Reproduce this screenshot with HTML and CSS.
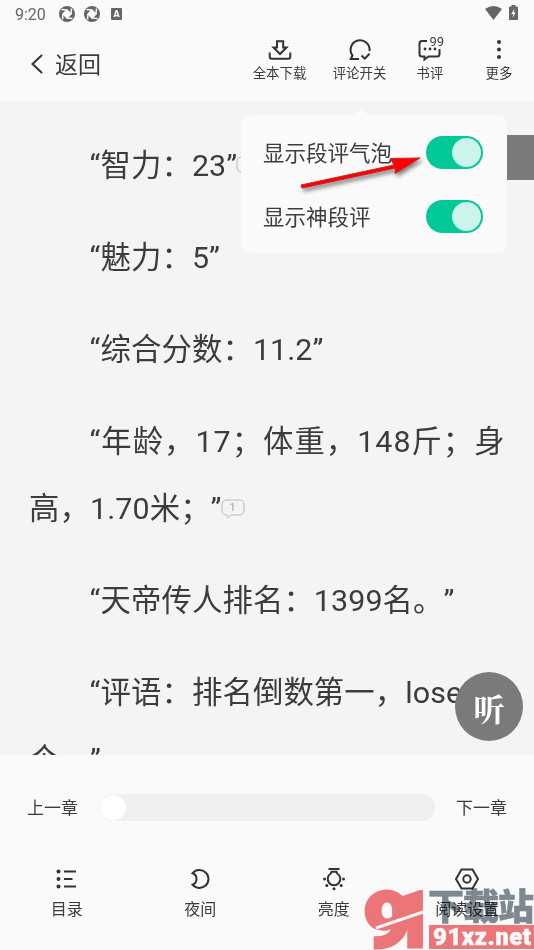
FILE: index.html
```html
<!DOCTYPE html>
<html lang="zh-CN">
<head>
  <meta charset="UTF-8">
  <meta name="viewport" content="width=device-width, initial-scale=1.0">
  <title>阅读</title>
  <link rel="stylesheet" href="styles.css">
</head>
<body>

<div class="reader">
  <div class="status">
    <span class="time">9:20</span>
    <svg class="swirl" width="16" height="16" viewBox="0 0 16 16"><circle cx="8" cy="8" r="8"/><path d="M8 3L13 8 8 13 3 8z"/><path class="cut" d="M8 4L2.500 3.500M12 8L12.500 2.500M8 12l5.500.500M4 8l-.500 5.500"/></svg>
    <svg class="swirl" width="16" height="16" viewBox="0 0 16 16"><circle cx="8" cy="8" r="8"/><path d="M8 3L13 8 8 13 3 8z"/><path class="cut" d="M8 4L2.500 3.500M12 8L12.500 2.500M8 12l5.500.500M4 8l-.500 5.500"/></svg>
    <span class="badge-a">A</span>
    <svg class="wifi" width="17" height="14" viewBox="0 0 17 14"><path d="M0 3Q8.500-3 17 3L8.500 14z"/></svg>
    <svg class="battery" width="9" height="15" viewBox="0 0 9 15"><path d="M2.500 1.500V0h4v1.500H8a1 1 0 0 1 1 1V14a1 1 0 0 1-1 1H1a1 1 0 0 1-1-1V2.500a1 1 0 0 1 1-1z"/><path class="bolt" d="M5.500 3.500L2.300 9h2L3.500 13 6.800 7.500H4.800z"/></svg>
  </div>

  <header class="topbar">
    <div class="back">
      <svg width="12" height="20" viewBox="0 0 12 20"><path d="M11 1L1.500 10 11 19"/></svg>
      <span>返回</span>
    </div>
    <div class="tool">
      <svg width="24" height="22" viewBox="0 0 24 22"><path d="M9 2.200h6.200v6.300h3.300L12 15 5.500 8.500H9zM1.700 13.500v4.300q0 2 2 2h16.600q2 0 2-2v-4.300"/></svg>
      <span>全本下载</span>
    </div>
    <div class="tool">
      <svg width="24" height="22" viewBox="0 0 24 22"><path d="M21.500 12.200A9.500 9.500 0 1 0 4.500 16.500L2.800 20H11M13.500 16.500l3.300 3.200 4.700-5"/></svg>
      <span>评论开关</span>
    </div>
    <div class="tool review">
      <svg width="24" height="22" viewBox="0 0 24 22"><path d="M9 2H4Q1.500 2 1.500 4.500v10.500q0 2.500 2.500 2.500h2.500v3l4-3h8.500q2.500 0 2.500-2.500V10"/><g class="dots"><circle cx="7" cy="10" r="1.400"/><circle cx="12" cy="10" r="1.400"/><circle cx="17" cy="10" r="1.400"/></g></svg>
      <span>书评</span>
      <b class="count">99</b>
    </div>
    <div class="tool more">
      <svg width="24" height="22" viewBox="0 0 24 22"><g class="dots"><circle cx="12" cy="3" r="2"/><circle cx="12" cy="10.500" r="2"/><circle cx="12" cy="18" r="2"/></g></svg>
      <span>更多</span>
    </div>
  </header>

  <main class="content">
    <p>“智力：23”<span class="bubble"><svg width="24" height="20" viewBox="0 0 24 20"><path d="M6 1h12q5 0 5 5v5q0 5-5 5h-8l-3 3-1-3q-5 0-5-5V6q0-5 5-5z"/></svg></span></p>
    <p>“魅力：5”</p>
    <p>“综合分数：11.2”</p>
    <p><span class="stretch">“年龄，17；体重，148斤；身</span><br>高，1.70米；”<span class="bubble"><svg width="24" height="20" viewBox="0 0 24 20"><path d="M6 1h12q5 0 5 5v5q0 5-5 5h-8l-3 3-1-3q-5 0-5-5V6q0-5 5-5z"/></svg><i>1</i></span></p>
    <p>“天帝传人排名：1399名。”</p>
    <p>“评语：排名倒数第一，lose<br>个。”</p>
  </main>

  <footer class="bottom">
    <div class="chapter">
      <span>上一章</span>
      <div class="slider"><div class="thumb"></div></div>
      <span>下一章</span>
    </div>
    <nav class="menu">
      <div class="item">
        <svg width="24" height="24" viewBox="0 0 24 24"><path d="M9 4.500h12M9 12h8.500M9 19.500h12"/><g class="dots"><circle cx="3.500" cy="4.500" r="2"/><circle cx="3.500" cy="12" r="2"/><circle cx="3.500" cy="19.500" r="2"/></g></svg>
        <span>目录</span>
      </div>
      <div class="item">
        <svg width="24" height="24" viewBox="0 0 24 24"><path d="M4.500 6.300A9 9 0 1 1 4.500 17.700Q8.500 16.500 8.500 12T4.500 6.300z"/></svg>
        <span>夜间</span>
      </div>
      <div class="item">
        <svg width="24" height="24" viewBox="0 0 24 24"><path d="M6.500 2h11M9.500 4.800h5l.700 1.700a6.300 6.300 0 1 1-6.400 0z"/><g class="dots"><circle cx="2.500" cy="12" r="1.500"/><circle cx="21.500" cy="12" r="1.500"/><circle cx="4.800" cy="18.500" r="1.500"/><circle cx="19.200" cy="18.500" r="1.500"/><circle cx="12" cy="21.800" r="1.500"/></g></svg>
        <span>亮度</span>
      </div>
      <div class="item">
        <svg width="24" height="24" viewBox="0 0 24 24"><path d="M6.500 2.500h11L23 12l-5.500 9.500h-11L1 12z"/><circle cx="12" cy="12" r="3.700"/></svg>
        <span>阅读设置</span>
      </div>
    </nav>
  </footer>

  <div class="side-tab"></div>

  <div class="popup">
    <div class="row"><span>显示段评气泡</span><div class="toggle"></div></div>
    <div class="row"><span>显示神段评</span><div class="toggle"></div></div>
  </div>

  <svg class="arrow" width="126" height="42" viewBox="0 0 126 42"><path d="M5 40L4 37 97 17 93.500 10.500 123 10 98 25.500 98.500 20 5.500 40z"/></svg>

  <div class="listen">听</div>

  <svg class="watermark" width="172" height="64" viewBox="0 0 172 64">
    <g class="red">
      <text class="nine" transform="translate(1 61) scale(1.080 1)">9</text>
      <text class="nine" transform="translate(28 61)">1</text>
      <path class="slash" d="M14 42L64 25"/>
      <rect x="67" y="39" width="105" height="24"/>
    </g>
    <text class="site" x="66" y="34" textLength="106">下载站</text>
    <text class="url" x="71" y="59" textLength="98">91xz.net</text>
  </svg>
</div>

</body>
</html>
```
FILE: styles.css
```css
* {
  box-sizing: border-box;
}

body {
  margin: 0;
  font-family: Roboto, "Noto Sans CJK SC", sans-serif;
  color: #3c3c3c;
}

svg {
  display: block;
  overflow: visible;
  fill: none;
  stroke: #333;
  stroke-width: 2;
}

.dots {
  fill: #333;
  stroke: none;
}

.reader {
  position: relative;
  display: flex;
  flex-direction: column;
  width: 534px;
  height: 950px;
  overflow: hidden;
  background: #f4f4f4;
}

/* status bar */
.status {
  display: flex;
  align-items: center;
  height: 28px;
  padding: 0 16px 0 15px;
  background: #fafafa;
  color: #666;
}

.status svg {
  fill: #666;
  stroke: none;
}

.time {
  width: 44px;
  font-size: 16px;
}

.status .swirl {
  margin-right: 9px;
  margin-top: -1px;
}

.status .swirl path {
  fill: #fafafa;
}

.status .swirl .cut {
  stroke: #fafafa;
  stroke-width: 1.500;
}

.badge-a {
  width: 11px;
  height: 12px;
  margin-left: 2px;
  border-radius: 1px;
  background: #666;
  color: #fff;
  font-size: 9px;
  font-weight: 900;
  line-height: 12px;
  text-align: center;
}

.wifi {
  margin-left: auto;
  margin-right: 7px;
  margin-top: -2px;
}

.battery {
  margin-top: -3px;
}

.status .bolt {
  fill: #fafafa;
}

/* top bar */
.topbar {
  display: flex;
  height: 73px;
  padding-left: 31px;
  background: #fafafa;
}

.back {
  display: flex;
  flex-shrink: 0;
  align-items: center;
  width: 208.500px;
  height: 72px;
  gap: 12px;
  font-size: 23px;
}

.back span {
  margin-top: -2px;
}

.tool {
  position: relative;
  display: flex;
  flex-direction: column;
  flex-shrink: 0;
  align-items: center;
  width: 80px;
  padding-top: 11px;
  font-size: 13.400px;
  line-height: 20px;
  white-space: nowrap;
}

.tool span {
  margin-top: 3px;
}

.review {
  width: 61px;
}

.more {
  width: 77px;
}

.count {
  position: absolute;
  left: 30px;
  top: 4px;
  font-size: 13px;
  font-weight: 400;
}

/* text */
.content {
  flex: 1;
  min-height: 0;
  padding: 31px 0 0 29px;
  overflow: hidden;
  font-size: 30.400px;
  line-height: 67px;
  letter-spacing: 0.100px;
  white-space: nowrap;
  text-spacing-trim: space-all;
}

.content p {
  margin: 0 0 25px;
  text-indent: 60.600px;
}

.stretch {
  letter-spacing: 1px;
}

.bubble {
  position: relative;
  display: inline-block;
  width: 24px;
  height: 20px;
  margin-left: -1px;
  text-indent: 0;
  vertical-align: 0;
}

.bubble svg {
  stroke: #bbb;
  stroke-width: 1;
}

.bubble i {
  position: absolute;
  left: 0;
  top: 0;
  width: 24px;
  color: #999;
  font-size: 10px;
  font-style: normal;
  line-height: 17px;
  text-align: center;
}

/* bottom panel */
.bottom {
  height: 195px;
  padding-top: 38px;
  background: #fafafa;
}

.chapter {
  display: flex;
  align-items: center;
  justify-content: space-between;
  height: 28px;
  padding: 0 27px;
  font-size: 17px;
}

.chapter span {
  margin-top: -2px;
}

.slider {
  width: 336px;
  height: 27px;
  border-radius: 14px;
  background: #efeff1;
}

.thumb {
  width: 28px;
  height: 27px;
  border: 1px solid #f3f3f4;
  border-radius: 50%;
  background: #fff;
}

.menu {
  display: flex;
  margin-top: 46px;
}

.item {
  display: flex;
  flex-direction: column;
  align-items: center;
  flex: 1;
  font-size: 16px;
  line-height: 24px;
}

.item span {
  margin-top: 7px;
}

/* floating parts */
.side-tab {
  position: absolute;
  right: 0;
  top: 135px;
  width: 27px;
  height: 45px;
  background: #7a7a7a;
}

.popup {
  position: absolute;
  left: 241px;
  top: 115px;
  width: 266px;
  height: 138px;
  padding: 5px 24px 0 22px;
  border-radius: 9px;
  background: #fafafa;
}

.popup::before {
  content: "";
  position: absolute;
  left: 112px;
  top: -7px;
  border: 8px solid transparent;
  border-top: 0;
  border-bottom-color: #fafafa;
}

.row {
  display: flex;
  align-items: center;
  justify-content: space-between;
  height: 64px;
  font-size: 21.500px;
}

.row span {
  margin-top: -2px;
}

.toggle {
  width: 57px;
  height: 33px;
  padding: 2px;
  border-radius: 17px;
  background: #00c896;
}

.toggle::after {
  content: "";
  display: block;
  width: 29px;
  height: 29px;
  margin-left: auto;
  border-radius: 50%;
  background: #ccf4ea;
}

.arrow {
  position: absolute;
  left: 297px;
  top: 148px;
  fill: #f00;
  stroke: #c22;
  stroke-width: 1;
  stroke-linejoin: round;
  filter: drop-shadow(2px 3px 2px rgba(0,0,0,0.5));
}

.listen {
  position: absolute;
  left: 455px;
  top: 672px;
  width: 68px;
  height: 69px;
  border-radius: 50%;
  background: #7a7a7a;
  color: #fff;
  font-family: "Noto Serif CJK SC", "Noto Sans CJK SC", serif;
  font-size: 31px;
  font-weight: 700;
  line-height: 72px;
  text-align: center;
}

.watermark {
  position: absolute;
  left: 362px;
  top: 886px;
  stroke: none;
  mix-blend-mode: multiply;
}

.watermark .red {
  fill: #f1777a;
}

.nine {
  stroke: #f1777a;
  stroke-width: 3;
  font-family: Roboto, sans-serif;
  font-size: 77px;
  font-weight: 900;
}

.slash {
  stroke: #fafafa;
  stroke-width: 3;
}

.site {
  fill: #7f8b92;
  stroke: #7f8b92;
  stroke-width: 0.600;
  font-family: "Noto Sans CJK SC", sans-serif;
  font-size: 36px;
  font-weight: 900;
}

.url {
  fill: #fff;
  stroke: #fff;
  stroke-width: 0.500;
  font-family: Roboto, sans-serif;
  font-size: 24px;
  font-weight: 900;
}
```
